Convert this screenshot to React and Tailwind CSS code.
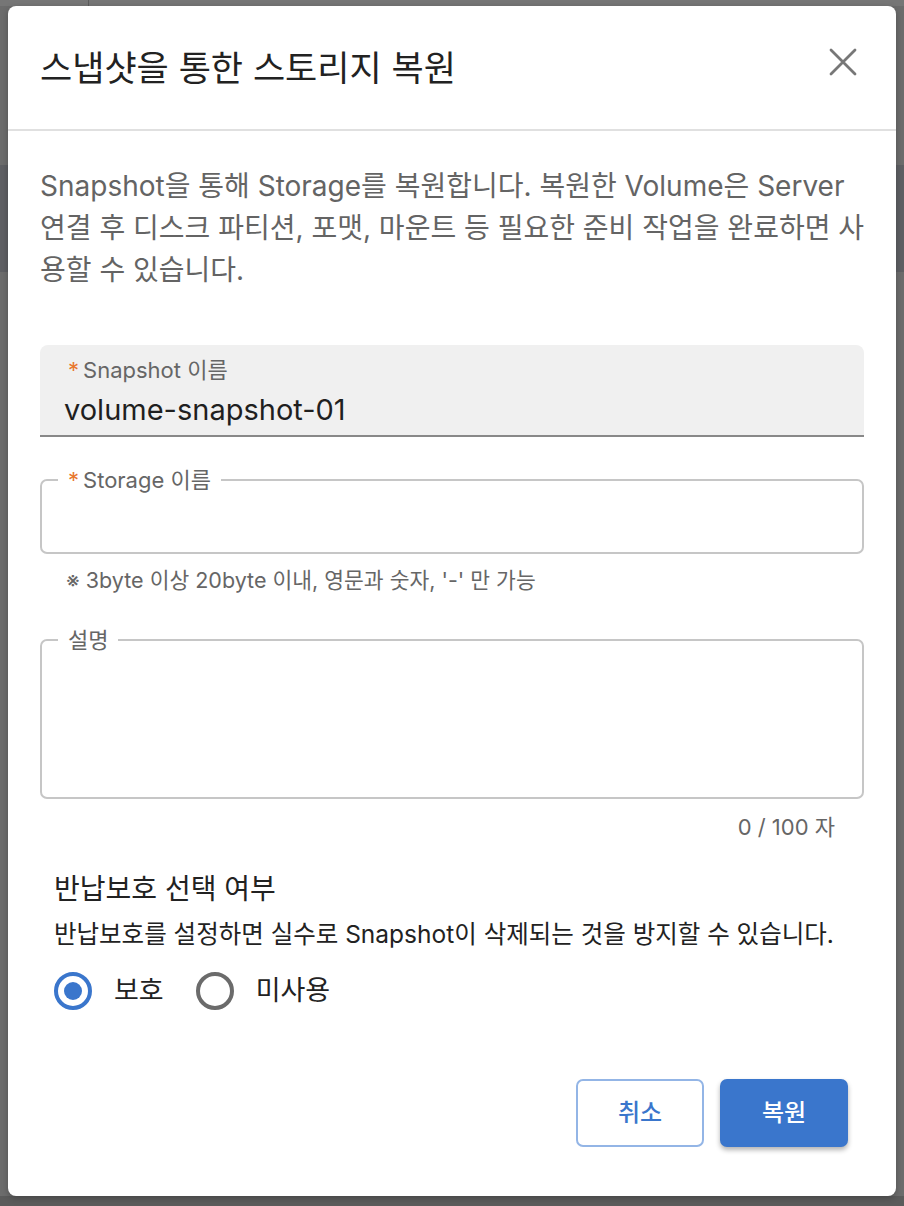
import React from 'react';

const Asterisk = () => <span className="mr-[4px] text-[#e8772e]">*</span>;

const Radio = ({ checked, label }) => (
  <label className="flex items-center gap-[22px]">
    <span
      className={
        checked
          ? 'flex h-[38px] w-[38px] items-center justify-center rounded-full border-[4px] border-[#3a76cc]'
          : 'flex h-[38px] w-[38px] items-center justify-center rounded-full border-[4px] border-[#6b6b6b]'
      }
    >
      {checked && <span className="h-[18px] w-[18px] rounded-full bg-[#3a76cc]" />}
    </span>
    <span className="text-[27px] leading-[40px] text-[#222]">{label}</span>
  </label>
);

const App = () => {
  return (
    <div className="relative h-[1206px] w-[904px] overflow-hidden bg-[#6c6c6c] font-['Inter','Noto_Sans_CJK_KR',sans-serif]">
      {/* page behind the scrim */}
      <div className="absolute inset-x-0 top-0 h-[6px] bg-[#767676]">
        <div className="absolute left-[88px] top-0 h-full w-px bg-[#5c5c5c]" />
      </div>
      <div className="absolute inset-x-0 top-[165px] h-[107px] bg-[#5e5f63]" />
      <div className="absolute inset-x-0 bottom-0 h-[10px] bg-[#5b5b5b]" />

      <div className="relative mx-[8px] mt-[6px] flex h-[1190px] flex-col rounded-[8px] bg-white shadow-[0_2px_6px_rgba(0,0,0,0.25)]">
        <div className="flex h-[125px] items-center justify-between border-b-2 border-[#e0e0e0] pl-[32px] pr-[38px]">
          <h2 className="text-[35px] font-normal leading-[44px] text-[#222]">스냅샷을 통한 스토리지 복원</h2>
          <svg width="30" height="30" viewBox="0 0 30 30" className="mb-[12px]">
            <path d="M3 3 L27 27 M27 3 L3 27" stroke="#777" strokeWidth="2.8" strokeLinecap="round" />
          </svg>
        </div>

        <div className="flex flex-col px-[32px] pt-[34px]">
          <p className="whitespace-nowrap text-[28px] leading-[42px] text-[#646464]">
            Snapshot을 통해 Storage를 복원합니다. 복원한 Volume은 Server
            <br />
            연결 후 디스크 파티션, 포맷, 마운트 등 필요한 준비 작업을 완료하면 사
            <br />
            용할 수 있습니다.
          </p>

          {/* Snapshot 이름 (readonly, filled) */}
          <div className="mt-[54px] h-[92px] rounded-t-[8px] border-b-2 border-[#888] bg-[#f0f0f0] pl-[24px] pt-[12px]">
            <div className="pl-[4px] text-[22px] leading-[26px] text-[#666]">
              <Asterisk />Snapshot 이름
            </div>
            <div className="mt-[10px] text-[29px] leading-[34px] text-[#1f1f1f]">volume-snapshot-01</div>
          </div>

          {/* Storage 이름 */}
          <fieldset className="mt-[30px] h-[87px] rounded-[7px] border-2 border-[#c6c6c6]">
            <legend className="ml-[16px] px-[10px] text-[22px] leading-[26px] text-[#666]">
              <Asterisk />Storage 이름
            </legend>
          </fieldset>
          <div className="mt-[13px] pl-[26px] text-[21.5px] leading-[26px] text-[#666]">
            ※ 3byte 이상 20byte 이내, 영문과 숫자, '-' 만 가능
          </div>

          {/* 설명 */}
          <fieldset className="mt-[34px] h-[172px] rounded-[7px] border-2 border-[#c6c6c6]">
            <legend className="ml-[16px] px-[10px] text-[22px] leading-[26px] text-[#666]">설명</legend>
          </fieldset>
          <div className="mt-[15px] pr-[29px] text-right text-[22px] leading-[26px] text-[#666]">0 / 100 자</div>

          <div className="mt-[32px] pl-[14px]">
            <div className="text-[28px] leading-[34px] text-[#222]">반납보호 선택 여부</div>
            <div className="mt-[12px] text-[24.5px] leading-[32px] text-[#222]">
              반납보호를 설정하면 실수로 Snapshot이 삭제되는 것을 방지할 수 있습니다.
            </div>
            <div className="mt-[21px] flex items-center gap-[32px]">
              <Radio checked label="보호" />
              <Radio label="미사용" />
            </div>
          </div>

          <div className="mt-[68px] flex justify-end gap-[16px] pr-[16px]">
            <button className="h-[68px] w-[128px] rounded-[7px] border-2 border-[#93b5e6] bg-white text-[24px] font-medium text-[#3a76cc]">
              취소
            </button>
            <button className="h-[68px] w-[128px] rounded-[7px] bg-[#3a76cc] text-[24px] font-medium text-white shadow-[0_3px_5px_rgba(0,0,0,0.3)]">
              복원
            </button>
          </div>
        </div>
      </div>
    </div>
  );
};

export default App;
